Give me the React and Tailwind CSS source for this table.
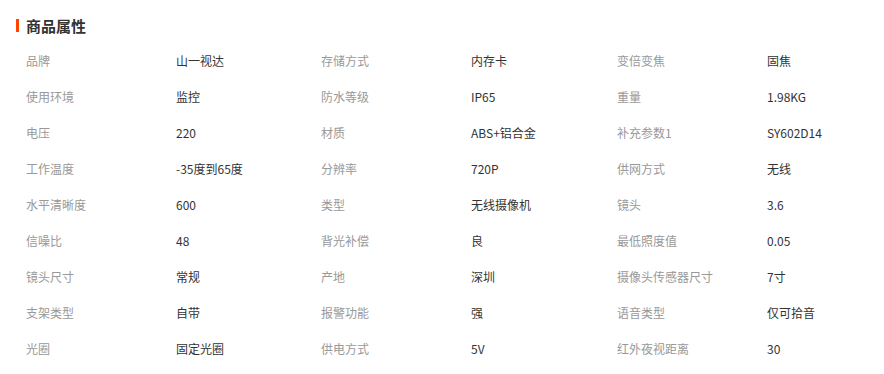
import React from 'react'

const rows = [
  ['品牌', '山一视达', '存储方式', '内存卡', '变倍变焦', '固焦'],
  ['使用环境', '监控', '防水等级', 'IP65', '重量', '1.98KG'],
  ['电压', '220', '材质', 'ABS+铝合金', '补充参数1', 'SY602D14'],
  ['工作温度', '-35度到65度', '分辨率', '720P', '供网方式', '无线'],
  ['水平清晰度', '600', '类型', '无线摄像机', '镜头', '3.6'],
  ['信噪比', '48', '背光补偿', '良', '最低照度值', '0.05'],
  ['镜头尺寸', '常规', '产地', '深圳', '摄像头传感器尺寸', '7寸'],
  ['支架类型', '自带', '报警功能', '强', '语音类型', '仅可拾音'],
  ['光圈', '固定光圈', '供电方式', '5V', '红外夜视距离', '30'],
]

const App = () => {
  return (
    <div
      className="w-[884px] h-[374px] bg-white overflow-hidden"
      style={{ fontFamily: '"Microsoft YaHei", "Noto Sans CJK SC", sans-serif' }}
    >
      {/* Title */}
      <div className="flex items-start pl-[16px] pt-[17px] h-[43px]">
        <span className="w-[3px] h-[13px] bg-[#ff4400] mt-[2px]"></span>
        <h3 className="ml-[7px] text-[15px] leading-[18px] font-bold text-[#333]">商品属性</h3>
      </div>

      {/* Attributes */}
      <div className="pl-[26px]">
        {rows.map((row, i) => (
          <div
            key={i}
            className="grid grid-cols-[150px_145px_150px_146px_150px_1fr] h-[36px] items-center text-[12px]"
          >
            {row.map((cell, j) => (
              <span key={j} className={j % 2 === 0 ? 'text-[#999]' : 'text-[#333]'}>
                {cell}
              </span>
            ))}
          </div>
        ))}
      </div>
    </div>
  )
}

export default App
